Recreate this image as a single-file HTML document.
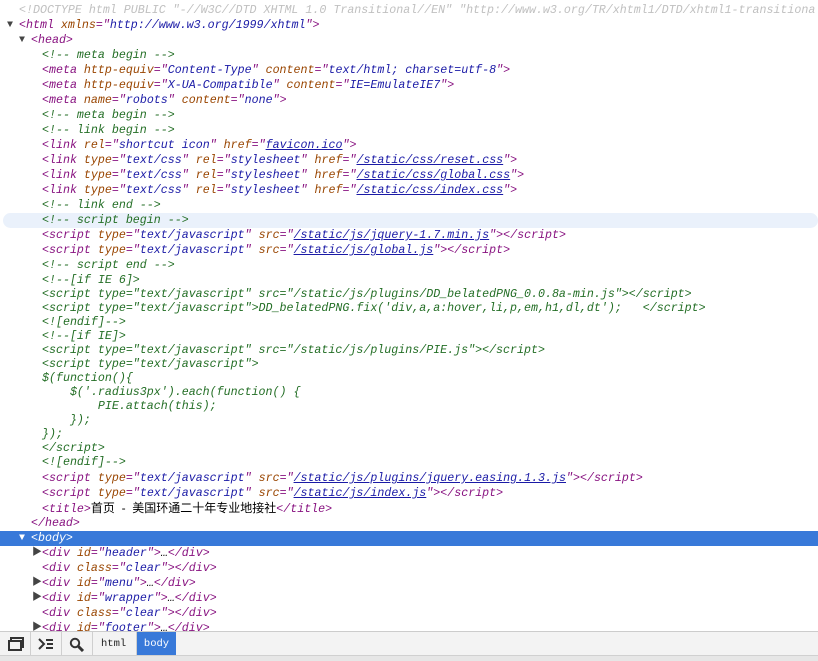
<!DOCTYPE html>
<html><head><meta charset="utf-8">
<style>
html,body{margin:0;padding:0;}
body{width:818px;height:660px;overflow:hidden;background:#fff;position:relative;font-family:"Liberation Mono","Noto Sans CJK SC",monospace;font-size:11.65px;font-style:italic;}
#tree{position:absolute;left:0;top:3px;width:818px;overflow:hidden;}
.r{height:15px;line-height:15px;white-space:pre;position:relative;overflow:hidden;}
.cb{line-height:14px;white-space:pre;color:#236e25;padding-left:42px;padding-top:0;overflow:hidden;}
.t{color:#881280}.a{color:#994500}.v{color:#1a1aa6}.c{color:#236e25}.d{color:#c0c0c0}
.u{color:#1a1aa6;text-decoration:underline}
.k{color:#000;font-style:normal;font-family:"Liberation Sans","Noto Sans CJK SC",sans-serif;font-size:12px}
.ar{position:absolute;font-style:normal;font-size:10px;color:#444;top:0}
.hov{background:#eaf1fb;border-radius:8px;margin:0 0 0 3px;}
.sel{background:#3879d9;}
.sel .t{color:#fff}
.sel .ar{color:#fff}
#bar{position:absolute;left:0;top:631px;width:818px;height:24px;background:#f3f3f3;border-top:1px solid #ccc;font-style:normal;}
#bot{position:absolute;left:0;top:655px;width:818px;height:5px;background:#e6e6e6;border-top:1px solid #d0d0d0;}
.sep{position:absolute;top:0;width:1px;height:24px;background:#cfcfcf;}
.tab{position:absolute;top:0;height:24px;line-height:24px;font-family:"Liberation Mono",monospace;font-size:10.5px;font-style:normal;color:#222;}
</style></head><body>
<div id="tree">
<div class="r" style="padding-left:19px"><span class="d">&lt;!DOCTYPE html PUBLIC "-//W3C//DTD XHTML 1.0 Transitional//EN" "http://www.w3.org/TR/xhtml1/DTD/xhtml1-transitiona</span></div>
<div class="r" style="padding-left:19px"><span class="ar" style="left:7px">▼</span><span class="t">&lt;html </span><span class="a">xmlns</span><span class="t">="</span><span class="v">http://www.w3.org/1999/xhtml</span><span class="t">"&gt;</span></div>
<div class="r" style="padding-left:31px"><span class="ar" style="left:19px">▼</span><span class="t">&lt;head&gt;</span></div>
<div class="r" style="padding-left:42px"><span class="c">&lt;!-- meta begin --&gt;</span></div>
<div class="r" style="padding-left:42px"><span class="t">&lt;meta </span><span class="a">http-equiv</span><span class="t">="</span><span class="v">Content-Type</span><span class="t">" </span><span class="a">content</span><span class="t">="</span><span class="v">text/html; charset=utf-8</span><span class="t">"&gt;</span></div>
<div class="r" style="padding-left:42px"><span class="t">&lt;meta </span><span class="a">http-equiv</span><span class="t">="</span><span class="v">X-UA-Compatible</span><span class="t">" </span><span class="a">content</span><span class="t">="</span><span class="v">IE=EmulateIE7</span><span class="t">"&gt;</span></div>
<div class="r" style="padding-left:42px"><span class="t">&lt;meta </span><span class="a">name</span><span class="t">="</span><span class="v">robots</span><span class="t">" </span><span class="a">content</span><span class="t">="</span><span class="v">none</span><span class="t">"&gt;</span></div>
<div class="r" style="padding-left:42px"><span class="c">&lt;!-- meta begin --&gt;</span></div>
<div class="r" style="padding-left:42px"><span class="c">&lt;!-- link begin --&gt;</span></div>
<div class="r" style="padding-left:42px"><span class="t">&lt;link </span><span class="a">rel</span><span class="t">="</span><span class="v">shortcut icon</span><span class="t">" </span><span class="a">href</span><span class="t">="</span><span class="u">favicon.ico</span><span class="t">"&gt;</span></div>
<div class="r" style="padding-left:42px"><span class="t">&lt;link </span><span class="a">type</span><span class="t">="</span><span class="v">text/css</span><span class="t">" </span><span class="a">rel</span><span class="t">="</span><span class="v">stylesheet</span><span class="t">" </span><span class="a">href</span><span class="t">="</span><span class="u">/static/css/reset.css</span><span class="t">"&gt;</span></div>
<div class="r" style="padding-left:42px"><span class="t">&lt;link </span><span class="a">type</span><span class="t">="</span><span class="v">text/css</span><span class="t">" </span><span class="a">rel</span><span class="t">="</span><span class="v">stylesheet</span><span class="t">" </span><span class="a">href</span><span class="t">="</span><span class="u">/static/css/global.css</span><span class="t">"&gt;</span></div>
<div class="r" style="padding-left:42px"><span class="t">&lt;link </span><span class="a">type</span><span class="t">="</span><span class="v">text/css</span><span class="t">" </span><span class="a">rel</span><span class="t">="</span><span class="v">stylesheet</span><span class="t">" </span><span class="a">href</span><span class="t">="</span><span class="u">/static/css/index.css</span><span class="t">"&gt;</span></div>
<div class="r" style="padding-left:42px"><span class="c">&lt;!-- link end --&gt;</span></div>
<div class="r hov" style="padding-left:39px"><span class="c">&lt;!-- script begin --&gt;</span></div>
<div class="r" style="padding-left:42px"><span class="t">&lt;script </span><span class="a">type</span><span class="t">="</span><span class="v">text/javascript</span><span class="t">" </span><span class="a">src</span><span class="t">="</span><span class="u">/static/js/jquery-1.7.min.js</span><span class="t">"&gt;&lt;/script&gt;</span></div>
<div class="r" style="padding-left:42px"><span class="t">&lt;script </span><span class="a">type</span><span class="t">="</span><span class="v">text/javascript</span><span class="t">" </span><span class="a">src</span><span class="t">="</span><span class="u">/static/js/global.js</span><span class="t">"&gt;&lt;/script&gt;</span></div>
<div class="r" style="padding-left:42px"><span class="c">&lt;!-- script end --&gt;</span></div>
<div class="cb" style="padding-top:1px;height:197px">&lt;!--[if IE 6]&gt;
&lt;script type="text/javascript" src="/static/js/plugins/DD_belatedPNG_0.0.8a-min.js"&gt;&lt;/script&gt;
&lt;script type="text/javascript"&gt;DD_belatedPNG.fix('div,a,a:hover,li,p,em,h1,dl,dt');   &lt;/script&gt;
&lt;![endif]--&gt;
&lt;!--[if IE]&gt;
&lt;script type="text/javascript" src="/static/js/plugins/PIE.js"&gt;&lt;/script&gt;
&lt;script type="text/javascript"&gt;
$(function(){
    $('.radius3px').each(function() {
        PIE.attach(this);
    });
});
&lt;/script&gt;
&lt;![endif]--&gt;</div>
<div class="r" style="padding-left:42px"><span class="t">&lt;script </span><span class="a">type</span><span class="t">="</span><span class="v">text/javascript</span><span class="t">" </span><span class="a">src</span><span class="t">="</span><span class="u">/static/js/plugins/jquery.easing.1.3.js</span><span class="t">"&gt;&lt;/script&gt;</span></div>
<div class="r" style="padding-left:42px"><span class="t">&lt;script </span><span class="a">type</span><span class="t">="</span><span class="v">text/javascript</span><span class="t">" </span><span class="a">src</span><span class="t">="</span><span class="u">/static/js/index.js</span><span class="t">"&gt;&lt;/script&gt;</span></div>
<div class="r" style="padding-left:42px"><span class="t">&lt;title&gt;</span><span class="k">首页 &nbsp;- &nbsp;美国环通二十年专业地接社</span><span class="t">&lt;/title&gt;</span></div>
<div class="r" style="padding-left:31px"><span class="t">&lt;/head&gt;</span></div>
<div class="r sel" style="padding-left:31px"><span class="ar" style="left:19px">▼</span><span class="t">&lt;body&gt;</span></div>
<div class="r" style="padding-left:42px"><span class="ar" style="left:32px">▶</span><span class="t">&lt;div </span><span class="a">id</span><span class="t">="</span><span class="v">header</span><span class="t">"&gt;</span>…<span class="t">&lt;/div&gt;</span></div>
<div class="r" style="padding-left:42px"><span class="t">&lt;div </span><span class="a">class</span><span class="t">="</span><span class="v">clear</span><span class="t">"&gt;&lt;/div&gt;</span></div>
<div class="r" style="padding-left:42px"><span class="ar" style="left:32px">▶</span><span class="t">&lt;div </span><span class="a">id</span><span class="t">="</span><span class="v">menu</span><span class="t">"&gt;</span>…<span class="t">&lt;/div&gt;</span></div>
<div class="r" style="padding-left:42px"><span class="ar" style="left:32px">▶</span><span class="t">&lt;div </span><span class="a">id</span><span class="t">="</span><span class="v">wrapper</span><span class="t">"&gt;</span>…<span class="t">&lt;/div&gt;</span></div>
<div class="r" style="padding-left:42px"><span class="t">&lt;div </span><span class="a">class</span><span class="t">="</span><span class="v">clear</span><span class="t">"&gt;&lt;/div&gt;</span></div>
<div class="r" style="padding-left:42px"><span class="ar" style="left:32px">▶</span><span class="t">&lt;div </span><span class="a">id</span><span class="t">="</span><span class="v">footer</span><span class="t">"&gt;</span>…<span class="t">&lt;/div&gt;</span></div>
</div>
<div id="bar">
<svg style="position:absolute;left:8px;top:5px" width="16" height="14" viewBox="0 0 16 14"><rect x="3" y="1" width="12" height="9" fill="none" stroke="#333" stroke-width="2"/><rect x="1" y="4" width="12" height="9" fill="#f3f3f3" stroke="#333" stroke-width="2"/></svg>
<div class="sep" style="left:30px"></div>
<svg style="position:absolute;left:38px;top:6px" width="16" height="12" viewBox="0 0 16 12"><path d="M1 1 L6 6 L1 11" fill="none" stroke="#333" stroke-width="2"/><path d="M8 2H15M9 6H15M8 10H15" stroke="#333" stroke-width="2"/></svg>
<div class="sep" style="left:61px"></div>
<svg style="position:absolute;left:69px;top:5px" width="16" height="15" viewBox="0 0 16 15"><circle cx="6" cy="6" r="4.2" fill="none" stroke="#333" stroke-width="2"/><path d="M9 9L14 14" stroke="#333" stroke-width="3"/></svg>
<div class="sep" style="left:92px"></div>
<div class="tab" style="left:101px">html</div>
<div class="sep" style="left:136px"></div>
<div class="tab" style="left:137px;width:39px;background:#3879d9;color:#fff;text-align:center">body</div>
</div>
<div id="bot"></div>
</body></html>
